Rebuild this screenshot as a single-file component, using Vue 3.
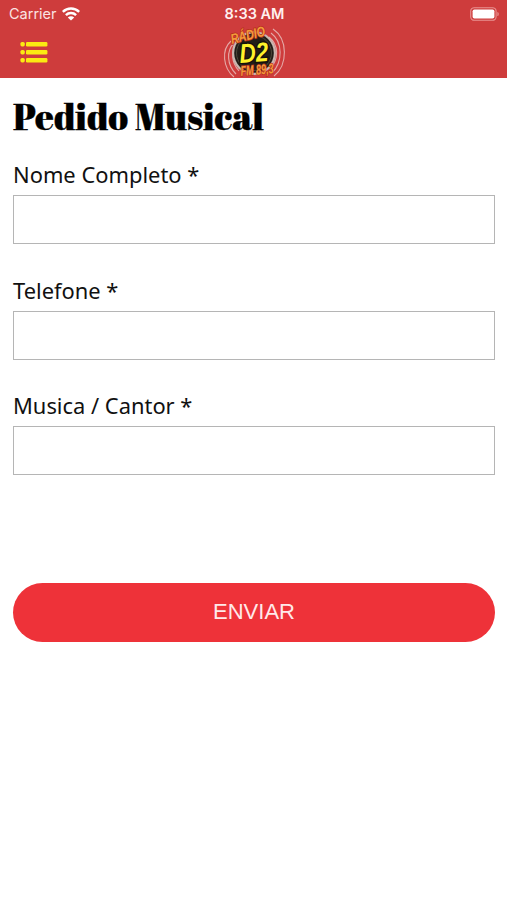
<template>
  <div class="app">
    <header class="header">
      <div class="status-bar">
        <div class="carrier">
          <span>Carrier</span>
          <svg class="wifi" width="18" height="14" viewBox="0 0 18 14">
            <path d="M.8 4.9C5.4 .4 12.6 .4 17.2 4.9M3.9 8.1c2.9-2.8 7.3-2.8 10.2 0" fill="none" stroke="#fff" stroke-width="2.5" />
            <path d="M5.8 10.4c1.8-1.6 4.6-1.6 6.4 0L9 13.6z" fill="#fff" />
          </svg>
        </div>
        <div class="time">8:33 AM</div>
        <svg class="battery" width="30" height="14" viewBox="0 0 30 14">
          <rect x=".7" y=".7" width="25.4" height="12.6" rx="3.6" fill="none" stroke="#e99291" stroke-width="1.1" />
          <rect x="2.6" y="2.5" width="21.8" height="9" rx="1.8" fill="#fff" />
          <path d="M27.4 4.9c1.8.5 1.8 3.7 0 4.2z" fill="#e99291" />
        </svg>
      </div>

      <div class="nav-bar">
        <button class="menu" type="button" aria-label="Menu">
          <svg width="28" height="22" viewBox="0 0 28 22" fill="#fbea12">
            <g v-for="y in [1, 9, 17]" :key="y">
              <rect x="0.4" :y="y" width="4.4" height="4.4" rx="1.6" />
              <rect x="6" :y="y" width="21.4" height="4.4" rx="1.2" />
            </g>
          </svg>
        </button>
        <svg class="logo" width="64" height="52" viewBox="0 0 64 52">
          <!-- ondas laterais -->
          <g fill="none" stroke="#e4aaa8" stroke-width="1.1">
            <path d="M9 15C-1 24 1 42 12 51M12 17C4 25 5 39 14 48M15 19C9 26 9 36 17 45" />
            <path d="M51 3C66 13 66 39 52 50M49 7C61 16 61 36 50 47M47 11C57 19 57 33 48 43" />
          </g>
          <circle cx="32" cy="27" r="22" fill="#c9b7b0" />
          <circle cx="32" cy="27" r="19.8" fill="#221e18" />
          <circle cx="32" cy="27" r="17.5" fill="none" stroke="#4e493c" stroke-width="1" />
          <g class="logo-text">
            <text class="small" x="10" y="18" textLength="35" lengthAdjust="spacingAndGlyphs" transform="rotate(-14 10 18)">RÁDIO</text>
            <text class="small" x="19" y="50" textLength="33" lengthAdjust="spacingAndGlyphs" transform="rotate(-5 19 50)">FM 89,3</text>
            <text class="big" x="18" y="37" textLength="29" lengthAdjust="spacingAndGlyphs" transform="rotate(-4 18 37)">D2</text>
          </g>
        </svg>
      </div>
    </header>

    <main class="content">
      <h1 class="title">Pedido Musical</h1>
      <form @submit.prevent>
        <div v-for="field in fields" :key="field.id" class="field">
          <label :for="field.id">{{ field.label }} *</label>
          <input :id="field.id" v-model="form[field.id]" :type="field.type" required />
        </div>
        <button class="submit" type="submit">ENVIAR</button>
      </form>
    </main>
  </div>
</template>

<script setup>
import { reactive } from 'vue'

const fields = [
  { id: 'nome', label: 'Nome Completo', type: 'text' },
  { id: 'telefone', label: 'Telefone', type: 'tel' },
  { id: 'musica', label: 'Musica / Cantor', type: 'text' }
]

const form = reactive({ nome: '', telefone: '', musica: '' })
</script>

<style>
body { background: #fff; }
</style>

<style scoped>
.app {
  min-height: 900px;
  background: #fff;
  color: #111;
  font-family: 'Noto Sans', sans-serif;
}

.header {
  box-sizing: border-box;
  height: 78px;
  background: #ce3c3c;
}

.status-bar {
  display: grid;
  grid-template-columns: 1fr auto 1fr;
  align-items: center;
  height: 26px;
  padding: 0 7px 0 9px;
  color: #fff;
  font: 14.5px/28px Inter, sans-serif;
}
.carrier {
  display: flex;
  align-items: center;
  gap: 5px;
  color: #fbe3e2;
}
.time { font-weight: 600; color: #fff0ef; }
.battery { justify-self: end; }

.nav-bar {
  display: grid;
  grid-template-columns: 1fr auto 1fr;
  height: 52px;
}
.menu {
  justify-self: start;
  height: 52px;
  padding: 0 0 0 20px;
  border: 0;
  background: none;
}
.menu svg { display: block; }
.logo { display: block; overflow: visible; }
.logo-text {
  font-family: 'Liberation Sans', sans-serif;
  font-weight: bold;
  font-style: italic;
  paint-order: stroke;
}
.logo-text .small {
  font-size: 14px;
  fill: #f39a3a;
  stroke: #b5301c;
  stroke-width: 1.6px;
}
.logo-text .big {
  font-size: 27px;
  fill: #fff12a;
  stroke: #17120c;
  stroke-width: 3px;
}

.content { padding: 16px 12px 0 13px; }

.title {
  margin: 0;
  color: #000;
  font: 36.5px/44px 'Abril Fatface', 'Liberation Serif', serif;
  -webkit-text-stroke: 0.35px #000;
  white-space: nowrap;
}

form { padding-top: 22px; }
.field {
  height: 84.5px;
  margin-bottom: 31px;
}
.field label {
  display: block;
  height: 35px;
  font-size: 21.9px;
  line-height: 30px;
}
.field input {
  display: block;
  box-sizing: border-box;
  width: 100%;
  height: 49px;
  padding: 0 12px;
  border: 1px solid #b5b5b5;
  border-radius: 0;
  font: inherit;
  font-size: 22px;
  outline: none;
}

.submit {
  display: block;
  width: 100%;
  height: 59px;
  margin-top: 107px;
  border: 0;
  border-radius: 30px;
  background: #ee3239;
  color: #ffe9e9;
  font: 22px 'Liberation Sans', Arial, sans-serif;
}
</style>
